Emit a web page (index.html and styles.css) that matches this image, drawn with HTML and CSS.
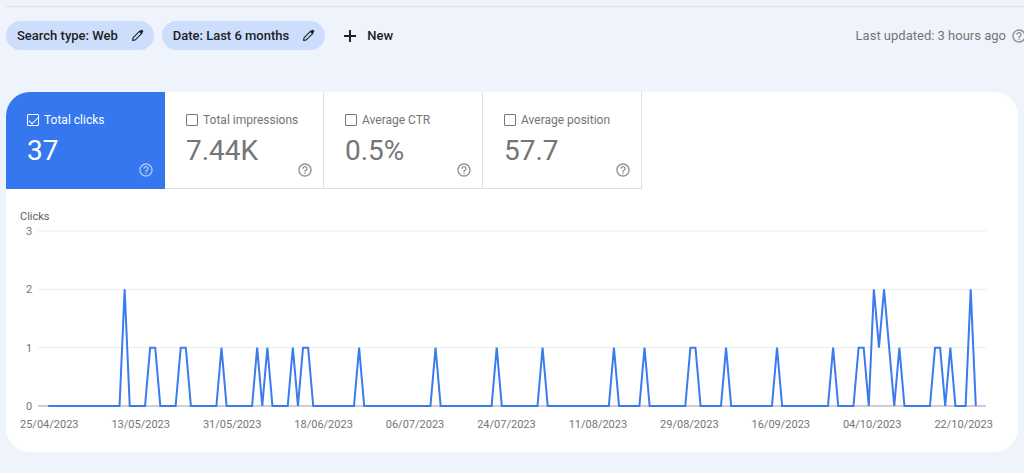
FILE: index.html
```html
<!DOCTYPE html>
<html lang="en">
<head>
<meta charset="utf-8">
<meta name="viewport" content="width=device-width, initial-scale=1">
<title>Performance</title>
<link rel="stylesheet" href="styles.css">
</head>
<body>
<svg class="sprite" aria-hidden="true">
  <symbol id="help" viewBox="0 0 24 24"><path d="M11 18h2v-2h-2v2zm1-16C6.48 2 2 6.48 2 12s4.480 10 10 10 10-4.480 10-10S17.520 2 12 2zm0 18c-4.410 0-8-3.590-8-8s3.590-8 8-8 8 3.590 8 8-3.590 8-8 8zm0-14c-2.210 0-4 1.790-4 4h2c0-1.100.9-2 2-2s2 .9 2 2c0 2-3 1.750-3 5h2c0-2.250 3-2.500 3-5 0-2.210-1.790-4-4-4z"/></symbol>
  <symbol id="pencil" viewBox="0 0 14 14"><path d="M1.700 12.300l.6-2.900 7.100-7.100 2.300 2.300-7.100 7.100z" fill="none" stroke="currentColor" stroke-width="1.200" stroke-linejoin="round"/><path d="M8.700 3l2-2q.7-.6 1.400 0l.9.900q.6.700 0 1.400l-2 2z"/></symbol>
</svg>

<header class="toolbar">
  <div class="filters">
    <button class="chip" type="button">Search type: Web<svg class="pencil"><use href="#pencil"/></svg></button>
    <button class="chip" type="button">Date: Last 6 months<svg class="pencil"><use href="#pencil"/></svg></button>
    <button class="new" type="button"><svg class="plus" viewBox="0 0 14 14"><path d="M7 1v12M1 7h12"/></svg>New</button>
  </div>
  <div class="updated">Last updated: 3 hours ago<button class="help" type="button" aria-label="About the last update"><svg class="help-icon"><use href="#help"/></svg></button></div>
</header>

<main class="card">
  <section class="metrics" aria-label="Metrics">
    <div class="metric metric-active">
      <label class="metric-name"><input class="check" type="checkbox" checked>Total clicks</label>
      <div class="metric-value">37</div>
      <button class="help metric-help" type="button" aria-label="About total clicks"><svg class="help-icon"><use href="#help"/></svg></button>
    </div>
    <div class="metric">
      <label class="metric-name"><input class="check" type="checkbox">Total impressions</label>
      <div class="metric-value">7.44K</div>
      <button class="help metric-help" type="button" aria-label="About total impressions"><svg class="help-icon"><use href="#help"/></svg></button>
    </div>
    <div class="metric">
      <label class="metric-name"><input class="check" type="checkbox">Average CTR</label>
      <div class="metric-value">0.5%</div>
      <button class="help metric-help" type="button" aria-label="About average CTR"><svg class="help-icon"><use href="#help"/></svg></button>
    </div>
    <div class="metric">
      <label class="metric-name"><input class="check" type="checkbox">Average position</label>
      <div class="metric-value">57.7</div>
      <button class="help metric-help" type="button" aria-label="About average position"><svg class="help-icon"><use href="#help"/></svg></button>
    </div>
  </section>

  <section class="chart">
    <h2 class="chart-title">Clicks</h2>
    <div class="plot-row">
      <div class="y-axis"><span>3</span><span>2</span><span>1</span><span>0</span></div>
      <!-- One x unit is one day, one y unit is one click -->
      <svg class="plot" viewBox="-2 0 186 3" preserveAspectRatio="none" role="img" aria-label="Clicks per day">
        <path class="grid" d="M-2 0H184M-2 1H184M-2 2H184"/>
        <path class="baseline" d="M-2 3H184"/>
        <polyline class="series" points="0,3 14,3 15,1 16,3 19,3 20,2 21,2 22,3 25,3 26,2 27,2 28,3 33,3 34,2 35,3 40,3 41,2 42,3 43,2 44,3 47,3 48,2 49,3 50,2 51,2 52,3 60,3 61,2 62,3 75,3 76,2 77,3 87,3 88,2 89,3 96,3 97,2 98,3 110,3 111,2 112,3 116,3 117,2 118,3 125,3 126,2 127,2 128,3 132,3 133,2 134,3 142,3 143,2 144,3 153,3 154,2 155,3 158,3 159,2 160,2 161,3 162,1 163,2 164,1 165,2 166,3 167,2 168,3 173,3 174,2 175,2 176,3 177,2 178,3 180,3 181,1 182,3"/>
      </svg>
    </div>
    <div class="x-axis"><span>25/04/2023</span><span>13/05/2023</span><span>31/05/2023</span><span>18/06/2023</span><span>06/07/2023</span><span>24/07/2023</span><span>11/08/2023</span><span>29/08/2023</span><span>16/09/2023</span><span>04/10/2023</span><span>22/10/2023</span></div>
  </section>
</main>
</body>
</html>
```
FILE: styles.css
```css
* { box-sizing: border-box; }

body {
  margin: 0;
  padding: 6px 6px 20px;
  overflow-x: hidden;
  background: #eff4fc;
  color: #757575;
  font-family: Roboto, sans-serif;
  font-size: 13px;
}

button {
  padding: 0;
  border: 0;
  background: none;
  color: inherit;
  font: inherit;
  cursor: pointer;
}

svg { flex: none; fill: currentColor; }

.sprite { position: absolute; width: 0; height: 0; }

.toolbar {
  display: flex;
  justify-content: space-between;
  align-items: center;
  margin-right: -9px;
  margin-bottom: 42px;
  padding-top: 14px;
  border-top: 1px solid #dfe1e2;
}

.filters { display: flex; gap: 8px; }

.chip,
.new {
  display: flex;
  align-items: center;
  height: 29px;
  color: #202124;
  font-weight: 500;
  white-space: nowrap;
}

.chip {
  gap: 13px;
  padding: 0 10px 0 11px;
  border-radius: 15px;
  background: #cddefd;
}

.pencil { width: 13px; height: 13px; }

.new { gap: 10px; margin-left: 10px; }

.plus {
  width: 14px;
  height: 14px;
  fill: none;
  stroke: currentColor;
  stroke-width: 2;
}

.updated {
  display: flex;
  align-items: center;
  gap: 5px;
  white-space: nowrap;
}

.help { display: flex; }

.help-icon { width: 16px; height: 16px; opacity: 0.8; }

.card {
  overflow: hidden;
  padding-bottom: 21px;
  border-radius: 24px;
  background: #fff;
}

.metrics { display: flex; }

.metric {
  position: relative;
  width: 159px;
  height: 97px;
  padding: 20px 0 0 21px;
  border-right: 1px solid #e0e0e0;
  border-bottom: 1px solid #e0e0e0;
}

.metric-active {
  border-color: #3477ee;
  background: #3477ee;
  color: #fff;
}

.metric-active .help-icon { opacity: 0.6; }

.metric-name {
  display: flex;
  align-items: center;
  gap: 5px;
  font-size: 12px;
  line-height: 16px;
  white-space: nowrap;
}

.check {
  appearance: none;
  display: grid;
  place-items: center;
  flex: none;
  width: 12px;
  height: 12px;
  margin: 0;
  border: 1px solid currentColor;
  border-radius: 1px;
  color: inherit;
}

.check:checked::after {
  content: "";
  width: 8px;
  height: 4px;
  margin-bottom: 2px;
  border: solid currentColor;
  border-width: 0 0 1px 1px;
  transform: rotate(-45deg);
}

.metric-value {
  margin-top: 6px;
  font-size: 28px;
  line-height: 34px;
}

.metric-help { position: absolute; right: 10px; bottom: 10px; }

.chart { padding: 22px 25px 0 14px; }

.chart-title {
  margin: 0;
  color: #616161;
  font-size: 11px;
  font-weight: 400;
  line-height: 12px;
}

.plot-row {
  display: flex;
  gap: 5px;
  margin: 3px 7px 0 6px;
}

.y-axis {
  display: flex;
  flex-direction: column;
  justify-content: space-between;
  width: 7px;
  height: 187px;
  font-size: 11px;
  line-height: 12px;
}

.plot {
  flex: 1;
  min-width: 0;
  height: 175px;
  margin-top: 5px;
  overflow: visible;
  fill: none;
}

.plot * { vector-effect: non-scaling-stroke; }

.grid { stroke: #ebebeb; stroke-width: 1; }

.baseline { stroke: #9e9e9e; stroke-width: 1; }

.series { stroke: #3b7bee; stroke-width: 2; }

.x-axis {
  display: flex;
  justify-content: space-between;
  margin-top: 6px;
  font-size: 11px;
  line-height: 12px;
}
```
